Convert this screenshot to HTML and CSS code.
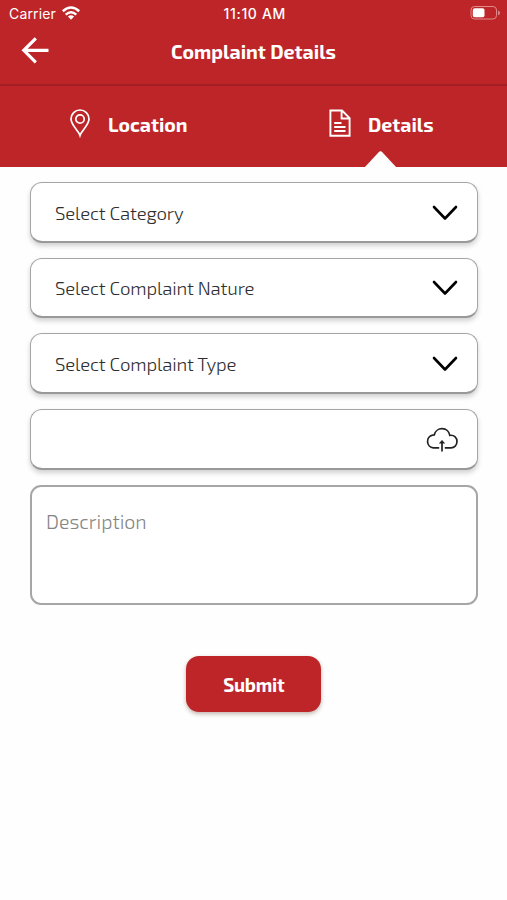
FILE: index.html
```html
<!DOCTYPE html>
<html lang="en">
<head>
<meta charset="utf-8">
<title>Complaint Details</title>
<link rel="stylesheet" href="styles.css">
</head>
<body>
<header class="header">
  <div class="status">
    <div class="carrier"><span class="carrier-name">Carrier</span>
      <svg class="wifi" width="18" height="14" viewBox="0 0 18 14" fill="none" stroke="#fff" stroke-width="2.5"><path d="M.8 5.2Q9-2.2 17.2 5.2M3.700 8.700Q9 3.800 14.300 8.700"/><path d="M9 13.800 5.900 10.600Q9 8 12.100 10.600Z" fill="#fff" stroke="none"/></svg>
    </div>
    <span class="time">11:10 AM</span>
    <svg class="battery" width="31" height="15" viewBox="0 0 31 15"><rect x="1" y=".5" width="25.500" height="12.500" rx="3.500" fill="none" stroke="#e08a8c"/><rect x="2.800" y="2.300" width="11.700" height="9" rx="1.800" fill="#fff"/><path d="M28 4.500v4.800q2-.8 2-2.400T28 4.500Z" fill="#df8587"/></svg>
  </div>
  <div class="navbar">
    <svg class="back" width="28" height="28" viewBox="0 0 28 28" fill="none" stroke="#fff" stroke-width="3.200"><path d="M14.800 1.300 2.800 13.300l12 12M2.800 13.300H27.500"/></svg>
    <h1 class="title">Complaint Details</h1>
  </div>
  <nav class="tabs">
    <div class="tab">
      <svg class="tab-icon" width="22" height="30" viewBox="0 0 22 30" fill="none" stroke="#fff" stroke-width="1.700"><path d="M11 26.500C9.500 21.700 2 16 2 10a9 9 0 0 1 18 0C20 16 12.500 21.700 11 26.500Z"/><circle cx="11" cy="10" r="4.200"/></svg>
      <span class="tab-label">Location</span>
    </div>
    <div class="tab active">
      <svg class="tab-icon" width="22" height="30" viewBox="0 0 22 30" fill="none" stroke="#fff" stroke-width="1.900"><path d="M1.400 1.500H13L20.600 9.200V26.700H1.400ZM12.600 1.700V9.500H20.500M5.200 14H12.500M5.200 18H16.500M5.200 22H16.500"/></svg>
      <span class="tab-label">Details</span>
    </div>
  </nav>
</header>
<main class="form">
  <div class="field"><span>Select Category</span><svg class="chevron" width="26" height="16" viewBox="0 0 26 16"><path d="M2 2 13 13.500 24 2"/></svg></div>
  <div class="field"><span>Select Complaint Nature</span><svg class="chevron" width="26" height="16" viewBox="0 0 26 16"><path d="M2 2 13 13.500 24 2"/></svg></div>
  <div class="field"><span>Select Complaint Type</span><svg class="chevron" width="26" height="16" viewBox="0 0 26 16"><path d="M2 2 13 13.500 24 2"/></svg></div>
  <div class="field upload"><svg width="32" height="27" viewBox="0 0 32 27" fill="none" stroke="#222" stroke-width="1.700"><path d="M13.200 21.800H7.300A6.400 6.400 0 0 1 6.500 9.200C7.500 8.700 8.300 8.800 8.300 8.800A7.900 7.900 0 0 1 23.800 9.300C28.500 8.800 31 11.800 31 15.600C31 19.300 28.300 21.800 25 21.800H18.800M16 25.500V15.500"/><path d="M16 14.100 12.800 17.400H19.200Z" fill="#222" stroke="none"/></svg></div>
  <div class="description"><span>Description</span></div>
  <button class="submit" type="button">Submit</button>
</main>
</body>
</html>
```
FILE: styles.css
```css
* { box-sizing: border-box; }
body {
  margin: 0;
  min-height: 900px;
  background: #fefefe;
  font-family: "Exo 2", "Noto Sans", sans-serif;
  color: #2e2e2e;
}
.header { height: 166.500px; background: #be2528; color: #fff; }
.status {
  height: 27px;
  padding: 0 6.500px 0 9px;
  display: grid;
  grid-template-columns: 1fr auto 1fr;
  align-items: center;
  font: 14px/27px Inter, sans-serif;
}
.carrier { display: flex; align-items: center; gap: 6px; }
.carrier-name { letter-spacing: .15px; }
.wifi { margin-bottom: 2px; }
.time { font-size: 14px; line-height: 26px; font-weight: 500; letter-spacing: .65px; }
.battery { justify-self: end; }
.navbar {
  height: 59px;
  padding: 0 21px 10px;
  display: grid;
  grid-template-columns: 28px 1fr 28px;
  align-items: center;
  border-bottom: 2px solid #a31f23;
}
.title { margin: 1px 0 0; text-align: center; font-size: 19.600px; line-height: 24px; font-weight: 700; }
.tabs { height: 80.500px; display: grid; grid-template-columns: 1fr 1fr; }
.tab { position: relative; display: flex; align-items: center; gap: 17px; padding: 0 0 4px 69px; }
.tab.active { padding-left: 75.500px; }
.tab-label { margin-top: 1px; font-size: 19.500px; line-height: 26px; font-weight: 700; }
.active::after {
  content: "";
  position: absolute;
  left: 111px;
  bottom: -1px;
  width: 32px;
  height: 16.500px;
  background: #fefefe;
  clip-path: polygon(0 100%, 45% 6%, 50% 0, 55% 6%, 100% 100%);
}
.form { padding: 15.500px 29.500px 0 30px; display: flex; flex-direction: column; gap: 15.100px; }
.field {
  height: 60.600px;
  padding: 2px 19px 0 24px;
  display: flex;
  align-items: center;
  justify-content: space-between;
  border: 1.500px solid #a5a5a5;
  border-bottom: 2px solid #999;
  border-radius: 12px;
  background: #fff;
  box-shadow: 0 3px 5px rgba(0, 0, 0, .18);
  font-size: 18.600px;
  line-height: 24px;
  font-weight: 350;
  letter-spacing: -.15px;
}
.chevron { fill: none; stroke: #000; stroke-width: 2.600; stroke-linecap: round; stroke-linejoin: round; }
.upload { justify-content: flex-end; }
.description {
  height: 120px;
  padding: 21px 14px;
  border: 2px solid #a6a6a6;
  border-radius: 11px;
  background: #fff;
  color: #858585;
  font-size: 19.600px;
  font-weight: 300;
  line-height: 26px;
}
.submit {
  width: 135px;
  height: 56px;
  margin: 36px 0 0;
  padding: 1px 0 0;
  align-self: center;
  border: 0;
  border-radius: 13px;
  background: #be2528;
  color: #fff;
  box-shadow: 0 2px 4px rgba(80, 40, 20, .35);
  font: 700 18.800px "Exo 2", "Noto Sans", sans-serif;
  letter-spacing: -.25px;
}
```
